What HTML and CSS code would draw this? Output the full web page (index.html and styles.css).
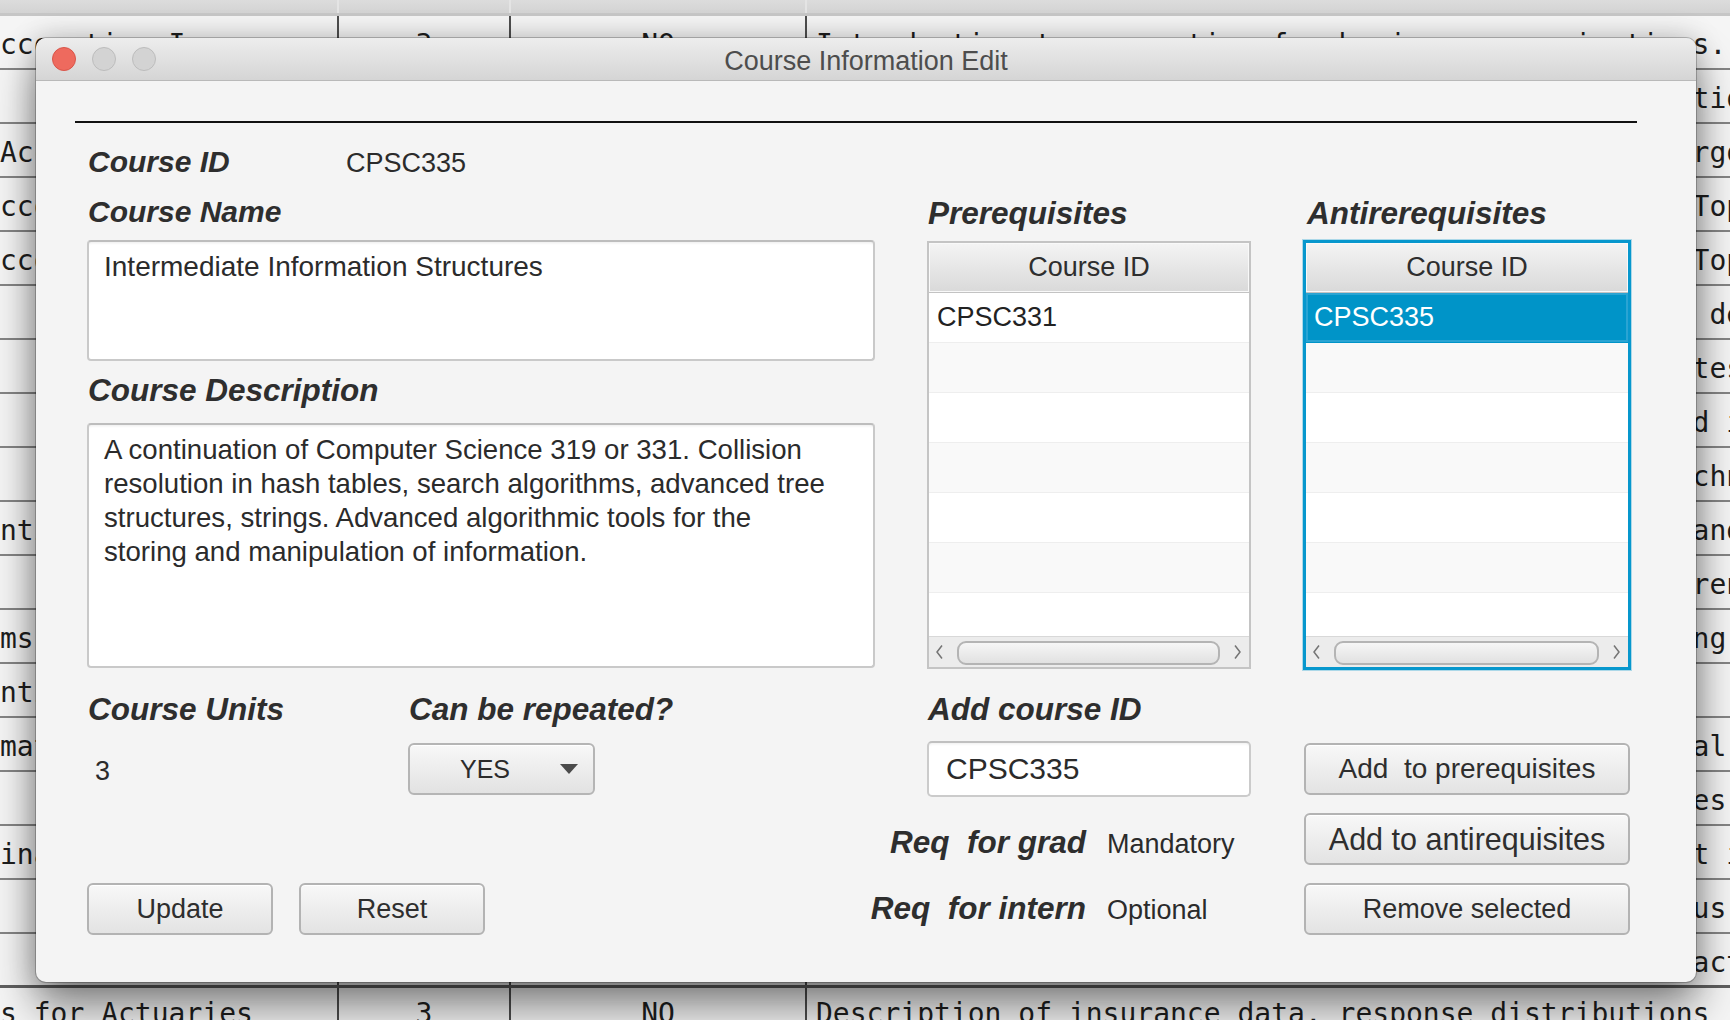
FILE: index.html
```html
<!DOCTYPE html>
<html lang="en">
<head>
<meta charset="utf-8">
<title>Course Information Edit</title>
<link rel="stylesheet" href="styles.css">
</head>
<body>
<div class="desk">
  <div class="bgt">
    <div class="bgt-head"><div class="hc"></div><div class="hc"></div><div class="hc"></div><div class="hc last"></div></div>
    <div class="bgt-row"><div class="cell c1">ccounting I</div><div class="cell c2">3</div><div class="cell c3">NO</div><div class="cell c4">Introduction to accounting for business organizations.</div></div>
    <div class="bgt-row"><div class="cell c1">   Financial Accounting</div><div class="cell c2">3</div><div class="cell c3">NO</div><div class="cell c4">Study of fundamental concepts, methods and practice tions of statistics.</div></div>
    <div class="bgt-row"><div class="cell c1">Accounting II</div><div class="cell c2">3</div><div class="cell c3">NO</div><div class="cell c4">Study of fundamental concepts, methods and practice rgonomics.</div></div>
    <div class="bgt-row"><div class="cell c1">ccounting III</div><div class="cell c2">3</div><div class="cell c3">YES</div><div class="cell c4">Study of fundamental concepts, methods and practice Topics in finance.</div></div>
    <div class="bgt-row"><div class="cell c1">ccounting IV</div><div class="cell c2">3</div><div class="cell c3">YES</div><div class="cell c4">Study of fundamental concepts, methods and practice Topics in auditing.</div></div>
    <div class="bgt-row"><div class="cell c1">   Auditing</div><div class="cell c2">3</div><div class="cell c3">NO</div><div class="cell c4">Study of fundamental concepts, methods and practice  design.</div></div>
    <div class="bgt-row"><div class="cell c1">   Taxation</div><div class="cell c2">3</div><div class="cell c3">NO</div><div class="cell c4">Study of fundamental concepts, methods and practice tests.</div></div>
    <div class="bgt-row"><div class="cell c1">   Business Law</div><div class="cell c2">3</div><div class="cell c3">NO</div><div class="cell c4">Study of fundamental concepts, methods and practice d in industry.</div></div>
    <div class="bgt-row"><div class="cell c1">   Economics</div><div class="cell c2">3</div><div class="cell c3">NO</div><div class="cell c4">Study of fundamental concepts, methods and practice chniques.</div></div>
    <div class="bgt-row"><div class="cell c1">ntial Equations</div><div class="cell c2">3</div><div class="cell c3">NO</div><div class="cell c4">Study of fundamental concepts, methods and practice and analysis.</div></div>
    <div class="bgt-row"><div class="cell c1">   Statistics</div><div class="cell c2">3</div><div class="cell c3">NO</div><div class="cell c4">Study of fundamental concepts, methods and practice rence.</div></div>
    <div class="bgt-row"><div class="cell c1">ms Analysis</div><div class="cell c2">3</div><div class="cell c3">NO</div><div class="cell c4">Study of fundamental concepts, methods and practice ng systems.</div></div>
    <div class="bgt-row"><div class="cell c1">ntial Calculus</div><div class="cell c2">3</div><div class="cell c3">NO</div><div class="cell c4">Short description.</div></div>
    <div class="bgt-row"><div class="cell c1">mathematics</div><div class="cell c2">3</div><div class="cell c3">NO</div><div class="cell c4">Study of fundamental concepts, methods and practice al methods.</div></div>
    <div class="bgt-row"><div class="cell c1">   Linear Algebra</div><div class="cell c2">3</div><div class="cell c3">NO</div><div class="cell c4">Study of fundamental concepts, methods and practice es, and more.</div></div>
    <div class="bgt-row"><div class="cell c1">inance</div><div class="cell c2">3</div><div class="cell c3">NO</div><div class="cell c4">Study of fundamental concepts, methods and practice t in practice.</div></div>
    <div class="bgt-row"><div class="cell c1">   Marketing</div><div class="cell c2">3</div><div class="cell c3">NO</div><div class="cell c4">Study of fundamental concepts, methods and practice us topics.</div></div>
    <div class="bgt-row thick"><div class="cell c1">   Management</div><div class="cell c2">3</div><div class="cell c3">NO</div><div class="cell c4">Study of fundamental concepts, methods and practice actice.</div></div>
    <div class="bgt-row end"><div class="cell c1">s for Actuaries</div><div class="cell c2">3</div><div class="cell c3">NO</div><div class="cell c4">Description of insurance data, response distributions</div></div>
  </div>

  <div class="dlg">
    <div class="titlebar">
      <div class="lights"><span class="tl red"></span><span class="tl"></span><span class="tl"></span></div>
      <div class="title">Course Information Edit</div>
      <div></div>
    </div>
    <div class="dlg-body">
      <div class="rule"></div>
      <div class="form">
        <div class="coll">
          <div class="idrow"><span class="lbl sm">Course ID</span><span class="val">CPSC335</span></div>
          <div class="lbl sm gap14">Course Name</div>
          <div class="ta name">Intermediate Information Structures</div>
          <div class="lbl gap11">Course Description</div>
          <div class="ta desc">A continuation of Computer Science 319 or 331. Collision<br>resolution in hash tables, search algorithms, advanced tree<br>structures, strings. Advanced algorithmic tools for the<br>storing and manipulation of information.</div>
          <div class="units">
            <div class="lbl">Course Units</div>
            <div class="lbl">Can be repeated?</div>
            <div class="val unitval">3</div>
            <div class="combo"><span class="combo-text">YES</span><svg class="caret" width="18" height="10" viewBox="0 0 18 10"><path d="M0 0H18L9 10Z" fill="#4b4b4b"/></svg></div>
          </div>
          <div class="btnrow">
            <div class="btn small">Update</div>
            <div class="btn small">Reset</div>
          </div>
        </div>

        <div class="colm">
          <div class="lbl pad1">Prerequisites</div>
          <div class="tbl">
            <div class="th">Course ID</div>
            <div class="tr">CPSC331</div>
            <div class="tr alt"></div>
            <div class="tr"></div>
            <div class="tr alt"></div>
            <div class="tr"></div>
            <div class="tr alt"></div>
            <div class="tr part"></div>
            <div class="sb">
              <span class="arr l"><svg width="9" height="16" viewBox="0 0 9 16"><path d="M7 1.5L2 8L7 14.5" fill="none" stroke="#747474" stroke-width="1.5"/></svg></span>
              <span class="thumb"></span>
              <span class="arr r"><svg width="9" height="16" viewBox="0 0 9 16"><path d="M2 1.5L7 8L2 14.5" fill="none" stroke="#747474" stroke-width="1.5"/></svg></span>
            </div>
          </div>
          <div class="lbl pad1 gap22">Add course ID</div>
          <div class="tf">CPSC335</div>
          <div class="req gap27"><div class="req-l"><span class="lbl">Req  for grad</span></div><span class="val">Mandatory</span></div>
          <div class="req gap30"><div class="req-l"><span class="lbl">Req  for intern</span></div><span class="val">Optional</span></div>
        </div>

        <div class="colr">
          <div class="lbl pad3">Antirerequisites</div>
          <div class="tbl focus">
            <div class="th">Course ID</div>
            <div class="tr sel">CPSC335</div>
            <div class="tr alt"></div>
            <div class="tr"></div>
            <div class="tr alt"></div>
            <div class="tr"></div>
            <div class="tr alt"></div>
            <div class="tr part"></div>
            <div class="sb">
              <span class="arr l"><svg width="9" height="16" viewBox="0 0 9 16"><path d="M7 1.5L2 8L7 14.5" fill="none" stroke="#747474" stroke-width="1.5"/></svg></span>
              <span class="thumb"></span>
              <span class="arr r"><svg width="9" height="16" viewBox="0 0 9 16"><path d="M2 1.5L7 8L2 14.5" fill="none" stroke="#747474" stroke-width="1.5"/></svg></span>
            </div>
          </div>
          <div class="btn wide gap74 f28">Add&nbsp; to prerequisites</div>
          <div class="btn wide gap18 f30">Add to antirequisites</div>
          <div class="btn wide gap18">Remove selected</div>
        </div>
      </div>
    </div>
  </div>
</div>
</body>
</html>
```

FILE: styles.css
```css
html, body {
  margin: 0;
  padding: 0;
}
body {
  width: 1730px;
  height: 1020px;
  overflow: hidden;
  background: #f4f4f4;
  font-family: "Liberation Sans", Arial, sans-serif;
}
.desk {
  position: relative;
  width: 1730px;
  height: 1020px;
  overflow: hidden;
}

/* background table */
.bgt {
  width: 1730px;
}
.bgt-head {
  display: grid;
  grid-template-columns: 339px 172px 296px 923px;
  height: 16px;
  box-sizing: border-box;
  border-bottom: 3px solid #c6c6c6;
  background: linear-gradient(#dcdcdc, #d3d3d3);
}
.hc {
  border-right: 2px solid #e4e4e4;
}
.hc.last { border-right: 0; }
.bgt-row {
  display: grid;
  grid-template-columns: 339px 172px 296px 923px;
  height: 54px;
  box-sizing: border-box;
  border-bottom: 2px solid #858585;
  background: #f5f5f5;
}
.bgt-row.thick {
  border-bottom: 3px solid #5f5f5f;
}
.cell {
  font-family: "DejaVu Sans Mono", "Liberation Mono", monospace;
  font-size: 28px;
  line-height: 52px;
  padding-top: 3px;
  box-sizing: border-box;
  color: #1e1e1e;
  white-space: pre;
  overflow: hidden;
}
.bgt-row.end .cell {
  padding-top: 0;
}
.c1, .c2, .c3 {
  border-right: 2px solid #4e4e4e;
}
.c2, .c3 { text-align: center; }
.c4 { padding-left: 9px; }

/* dialog window */
.dlg {
  position: absolute;
  left: 36px;
  top: 38px;
  width: 1660px;
  height: 944px;
  border-radius: 10px;
  overflow: hidden;
  background: #f4f4f4;
  box-shadow: 0 0 0 1px rgba(0, 0, 0, 0.22), 0 0 28px rgba(0, 0, 0, 0.22), 0 26px 44px rgba(0, 0, 0, 0.45);
}
.titlebar {
  height: 43px;
  box-sizing: border-box;
  border-bottom: 1px solid #b9b9b9;
  background: linear-gradient(#ededed, #d5d5d5);
  display: grid;
  grid-template-columns: 1fr auto 1fr;
  align-items: center;
}
.lights {
  display: flex;
  gap: 16px;
  padding-left: 16px;
  align-items: center;
}
.tl {
  width: 24px;
  height: 24px;
  box-sizing: border-box;
  border-radius: 50%;
  background: #d3d3d3;
  border: 1px solid #bcbcbc;
}
.tl.red {
  background: #ee6a5e;
  border-color: #d85549;
}
.title {
  font-size: 27px;
  color: #4d4d4d;
  padding-top: 4px;
}
.dlg-body {
  padding-top: 40px;
}
.rule {
  margin-left: 39px;
  width: 1562px;
  height: 2px;
  background: #111;
}
.form {
  display: flex;
  gap: 52px;
  padding-left: 51px;
  margin-top: 21px;
  align-items: flex-start;
}
.coll { width: 788px; }
.colm { width: 324px; padding-top: 51px; }
.colr { width: 326px; padding-top: 51px; margin-left: 1px; }

.lbl {
  display: block;
  height: 36px;
  line-height: 36px;
  font-size: 31.5px;
  font-weight: bold;
  font-style: italic;
  color: #2e2e2e;
  white-space: pre;
  padding-left: 1px;
}
.lbl.sm { font-size: 30px; }
.pad1 { padding-left: 1px; }
.pad3 { padding-left: 3px; }
.val {
  font-size: 27px;
  line-height: 36px;
  color: #2b2b2b;
  white-space: nowrap;
}
.idrow {
  display: grid;
  grid-template-columns: 259px 1fr;
  align-items: baseline;
  height: 36px;
}
.gap11 { margin-top: 11px; }
.gap14 { margin-top: 14px; }
.gap18 { margin-top: 18px; }
.gap22 { margin-top: 22px; }
.gap27 { margin-top: 27px; }
.gap30 { margin-top: 30px; }
.gap74 { margin-top: 74px; }

.ta {
  box-sizing: border-box;
  background: #fff;
  border: 2px solid #c9c9c9;
  border-top-color: #bdbdbd;
  border-radius: 4px;
  padding: 8px 15px;
  font-size: 27.6px;
  line-height: 34px;
  color: #2b2b2b;
  box-shadow: inset 0 3px 3px -2px rgba(0, 0, 0, 0.08);
  white-space: nowrap;
}
.ta.name { margin-top: 10px; height: 121px; font-size: 28px; }
.ta.desc { margin-top: 15px; height: 245px; }

.units {
  display: grid;
  grid-template-columns: 321px 1fr;
  row-gap: 16px;
  margin-top: 23px;
  align-items: center;
}
.unitval {
  padding-left: 8px;
  padding-top: 4px;
}
.combo {
  width: 187px;
  height: 52px;
  box-sizing: border-box;
  border: 2px solid #b5b5b5;
  border-radius: 6px;
  background: linear-gradient(#f8f8f8, #e2e2e2);
  box-shadow: inset 0 1px 0 #ffffff;
  display: flex;
  align-items: center;
}
.combo-text {
  width: 150px;
  text-align: center;
  font-size: 25px;
  color: #2b2b2b;
}
.caret { display: block; margin-top: -1px; }

.btn {
  height: 52px;
  box-sizing: border-box;
  border: 2px solid #b3b3b3;
  border-radius: 6px;
  background: linear-gradient(#f8f8f8, #e3e3e3);
  box-shadow: inset 0 1px 0 #ffffff;
  display: flex;
  align-items: center;
  justify-content: center;
  font-size: 27px;
  color: #2e2e2e;
  white-space: nowrap;
}
.btn.small { width: 186px; }
.btn.wide { width: 326px; }
.btn.f28 { font-size: 28px; }
.btn.f30 { font-size: 30.5px; }
.btnrow {
  display: flex;
  gap: 26px;
  margin-top: 88px;
}

/* tables */
.tbl {
  margin-top: 10px;
  height: 428px;
  box-sizing: border-box;
  border: 2px solid #c4c4c4;
  background: #fff;
  display: flex;
  flex-direction: column;
}
.tbl.focus {
  border-color: #0797cd;
  box-shadow: 0 0 0 1px #0797cd, 0 0 0 2px rgba(7, 151, 205, 0.3);
}
.th {
  height: 50px;
  flex: none;
  box-sizing: border-box;
  border-bottom: 1px solid #c3c3c3;
  background: linear-gradient(#f4f4f4, #d9d9d9);
  box-shadow: inset 0 0 0 1px #f9f9f9;
  display: flex;
  align-items: center;
  justify-content: center;
  font-size: 27px;
  color: #2e2e2e;
}
.tr {
  height: 50px;
  flex: none;
  box-sizing: border-box;
  border-bottom: 1px solid #eeeeee;
  background: #ffffff;
  padding-left: 8px;
  display: flex;
  align-items: center;
  font-size: 27px;
  color: #222;
}
.tr.alt { background: #f9f9f9; }
.tr.part { height: 43px; border-bottom: 0; }
.tr.sel {
  background: #0094c8;
  color: #fff;
  box-shadow: inset 0 0 0 2px #2aa4d3;
  border-bottom-color: #0094c8;
}
.sb {
  height: 31px;
  flex: none;
  box-sizing: border-box;
  border-top: 1px solid #d8d8d8;
  background: #ececec;
  display: flex;
  align-items: flex-start;
}
.arr {
  height: 30px;
  display: flex;
  align-items: center;
}
.arr.l { width: 28px; padding-left: 6px; box-sizing: border-box; }
.arr.r { width: 29px; padding-left: 13px; box-sizing: border-box; }
.thumb {
  flex: 1;
  height: 24px;
  margin-top: 4px;
  box-sizing: border-box;
  border: 2px solid #b4b4b4;
  border-radius: 9px;
  background: linear-gradient(#f6f6f6, #e1e1e1);
}

.tf {
  margin-top: 14px;
  height: 56px;
  box-sizing: border-box;
  border: 2px solid #cbcbcb;
  border-top-color: #c0c0c0;
  border-radius: 5px;
  background: #fff;
  padding-left: 17px;
  display: flex;
  align-items: center;
  font-size: 30px;
  color: #2b2b2b;
  box-shadow: inset 0 3px 3px -2px rgba(0, 0, 0, 0.07);
}
.req {
  display: flex;
  align-items: baseline;
  height: 36px;
}
.req-l {
  width: 159px;
  flex: none;
  display: flex;
  justify-content: flex-end;
}
.req .val {
  margin-left: 21px;
}
```
